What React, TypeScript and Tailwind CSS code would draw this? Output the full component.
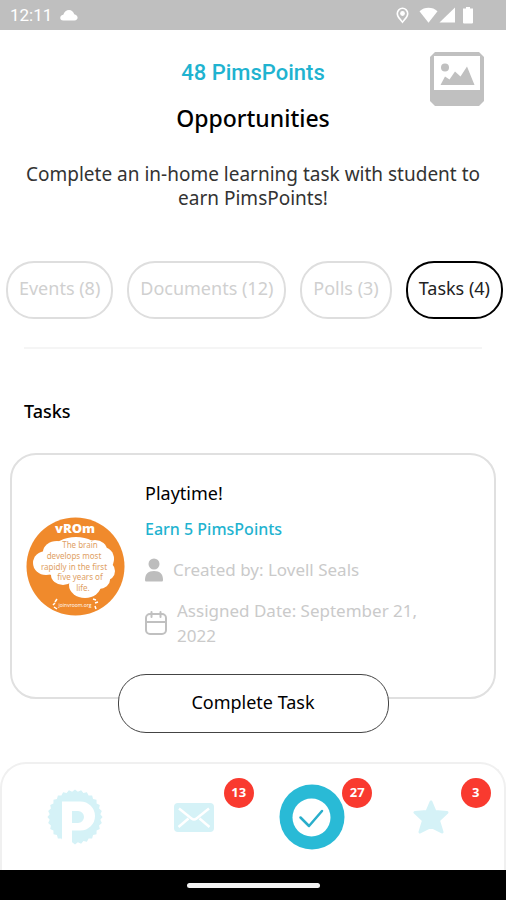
import { clsx } from "clsx";

const tabs = [
  { label: "Events (8)", active: false },
  { label: "Documents (12)", active: false },
  { label: "Polls (3)", active: false },
  { label: "Tasks (4)", active: true },
];

const StatusBar = () => (
  <div className="flex h-[30px] items-center justify-between bg-[#bfbfbf] px-2.5 font-['Roboto',sans-serif] text-white">
    <div className="flex items-center gap-2">
      <span className="text-[17px] leading-5">12:11</span>
      <svg className="h-3 w-[18px]" viewBox="0 0 18 12" fill="currentColor">
        <path d="M3.500 11.500C.8 11.500 0 9.800.3 8.300.6 6.800 2 6 3.300 5.800 4.200 3 6.500 1 9 1s4.500 1.700 5.200 4.200c2 .3 3.400 1.600 3.400 3.400 0 1.600-1.200 2.900-3.100 2.900z" />
      </svg>
    </div>
    <svg className="mr-5 h-5 w-20" viewBox="0 0 80 20" fill="currentColor">
      <path
        fillRule="evenodd"
        d="M4.500 2.500a6 6 0 0 0-6 6c0 3.800 3 6 6 10 3-4 6-6.200 6-10a6 6 0 0 0-6-6zm0 1.600a4.400 4.400 0 0 1 4.400 4.400c0 2.500-2 4.400-4.400 7.500-2.400-3.100-4.400-5-4.400-7.500a4.400 4.400 0 0 1 4.400-4.400z"
        transform="translate(2 0)"
      />
      <circle cx="6.500" cy="8.500" r="2.400" />
      <path d="M23.500 6.200c5-4.600 13-4.600 18 0L32.500 17.800z" />
      <path d="M59 2.500v15H43.500z" />
      <path d="M70 2h4v1.500h3v14a1 1 0 0 1-1 1h-8a1 1 0 0 1-1-1v-14h3z" />
    </svg>
  </div>
);

const PhotoIcon = () => (
  <svg className="h-[54px] w-[54px]" viewBox="0 0 54 54">
    <path d="M5 0h44l5 5v44l-5 5H5l-5-5V5z" fill="#c0c0c0" />
    <path d="M4 4h46v34H4z" fill="#fff" />
    <circle cx="15" cy="15.500" r="4" fill="#c0c0c0" />
    <path d="M10.500 33l4.500-8.500 4.500 3 5.500-8 5.500 5L37 14.500 44.500 33z" fill="#c0c0c0" />
  </svg>
);

const VroomLogo = () => (
  <svg className="h-[99px] w-[99px] shrink-0" viewBox="0 0 99 99">
    <circle cx="49.500" cy="49.500" r="49" fill="#f08a2c" />
    <g fill="#fff">
      <ellipse cx="50" cy="32" rx="22" ry="12" />
      <ellipse cx="31" cy="35" rx="14" ry="11" />
      <ellipse cx="69" cy="33" rx="12" ry="10" />
      <ellipse cx="20" cy="46" rx="13" ry="12" />
      <ellipse cx="77" cy="42" rx="11" ry="12" />
      <ellipse cx="79" cy="54" rx="10" ry="10" />
      <ellipse cx="50" cy="48" rx="34" ry="15" />
      <ellipse cx="37" cy="58" rx="12" ry="10" />
      <ellipse cx="73" cy="63" rx="11" ry="9" />
      <ellipse cx="59" cy="68" rx="16" ry="13" />
    </g>
    <text x="49" y="16" textAnchor="middle" fontFamily="Open Sans, sans-serif" fontWeight="800" fontSize="13" fill="#fff">
      vROm
    </text>
    <g fontFamily="Noto Sans, sans-serif" fontSize="8" textAnchor="middle" fill="#e0a063">
      <text x="54" y="31">The brain</text>
      <text x="48" y="42">develops most</text>
      <text x="48" y="53">rapidly in the first</text>
      <text x="54" y="63">five years of</text>
      <text x="57" y="74">life.</text>
    </g>
    <text x="49" y="90" textAnchor="middle" fontFamily="Open Sans, sans-serif" fontSize="5" fill="#fff">
      joinvroom.org
    </text>
    <path
      d="M31 82l-2 3M29 86l-2 2M28 90l3 2M67 82l3 1M69 86l3-1M69 89l1 3"
      stroke="#fff"
      strokeWidth="1.500"
      fill="none"
    />
  </svg>
);

const PersonIcon = () => (
  <svg className="h-6 w-[18px] shrink-0" viewBox="0 0 18 24" fill="#bdbdbd">
    <circle cx="9" cy="6" r="5.500" />
    <path d="M0 22c0-6 3-9 9-9s9 3 9 9c0 1-.6 1.500-1.500 1.500h-15C.6 23.500 0 23 0 22z" />
  </svg>
);

const CalendarIcon = () => (
  <svg
    className="h-6 w-[22px] shrink-0"
    viewBox="0 0 22 24"
    fill="none"
    stroke="#c0c0c0"
    strokeWidth="2"
    strokeLinecap="round"
  >
    <rect x="1" y="3" width="20" height="20" rx="4" />
    <path d="M1 11h20M6.500 1v5M15.500 1v5" />
  </svg>
);

// outer edge of the serrated coin
const coinPoints = Array.from({ length: 56 }, (_, i) => {
  const r = i % 2 === 0 ? 27.5 : 25.5;
  const a = (i * Math.PI) / 28;
  return `${(28 + r * Math.cos(a)).toFixed(2)},${(28 + r * Math.sin(a)).toFixed(2)}`;
}).join(" ");

const CoinIcon = () => (
  <svg className="h-14 w-14" viewBox="0 0 56 56">
    <polygon points={coinPoints} fill="#d5f2f7" />
    <path
      fillRule="evenodd"
      d="M15 12.500h18.500a13.500 13.500 0 0 1 0 29H25V56H15zM25 22v12h6a6 6 0 0 0 0-12z"
      fill="#fff"
    />
  </svg>
);

const MailIcon = () => (
  <svg className="h-[29px] w-10" viewBox="0 0 40 29">
    <rect width="40" height="29" rx="4" fill="#d5f2f7" />
    <path
      d="M5 5.500l12.500 10q2.500 2 5 0L35 5.500M4.500 24l10-8.500M35.500 24l-10-8.500"
      fill="none"
      stroke="#fff"
      strokeWidth="2.500"
    />
  </svg>
);

const CheckIcon = () => (
  <svg className="h-[66px] w-[66px]" viewBox="0 0 66 66">
    <circle cx="33" cy="33" r="32.500" fill="#29bad6" />
    <circle cx="32.500" cy="33.500" r="19" fill="#fff" />
    <path
      d="M21.500 33.500l8.500 8.500L43 27"
      fill="none"
      stroke="#29aecb"
      strokeWidth="2.500"
      strokeLinecap="round"
      strokeLinejoin="round"
    />
  </svg>
);

const StarIcon = () => (
  <svg className="h-[34px] w-9" viewBox="0 0 36 34">
    <path
      d="M18 2l4 9.500 12 1-8.500 8 3.500 11.500L18 26.500 7 32l3.500-11.500-8.500-8 12-1z"
      fill="#d5f2f7"
      stroke="#d5f2f7"
      strokeWidth="3"
      strokeLinejoin="round"
    />
  </svg>
);

const navItems = [
  { name: "Home", icon: <CoinIcon />, count: null },
  { name: "Messages", icon: <MailIcon />, count: 13 },
  { name: "Opportunities", icon: <CheckIcon />, count: 27 },
  { name: "Favorites", icon: <StarIcon />, count: 3 },
];

const App = () => {
  return (
    <div className="flex min-h-screen flex-col bg-white font-['Noto_Sans',sans-serif] text-black">
      <StatusBar />

      <header className="grid grid-cols-[1fr_auto_1fr] px-[22px] pt-[22px]">
        <div className="col-start-2 pt-2 text-center">
          <p className="font-['Roboto',sans-serif] text-[22px] leading-[26px] font-medium text-[#1fb3d0]">
            48 PimsPoints
          </p>
          <h1 className="mt-[18px] text-[23px] leading-7 font-medium">Opportunities</h1>
        </div>
        <div className="justify-self-end">
          <PhotoIcon />
        </div>
      </header>

      <main className="flex flex-col">
        <p className="mt-[30px] px-5 text-center text-[19px] leading-6 text-[#333]">
          Complete an in-home learning task with student to earn PimsPoints!
        </p>

        <div className="mt-[51px] flex gap-3.5 pr-[3px] pl-1.5">
          {tabs.map((tab) => (
            <button
              key={tab.label}
              className={clsx(
                "h-[58px] flex-auto rounded-[28px] border-2 pb-1 text-lg leading-6 whitespace-nowrap",
                tab.active ? "border-black text-[#222]" : "border-[#dedede] text-[#d0d0d0]"
              )}
            >
              {tab.label}
            </button>
          ))}
        </div>

        <hr className="mx-6 mt-7 border-t-2 border-[#f5f5f5]" />

        <h2 className="mt-[50px] px-6 text-lg leading-6 font-medium">Tasks</h2>

        <section className="mx-2.5 mt-[30px] flex flex-col">
          <div className="flex min-h-[246px] items-start rounded-[26px] border-2 border-[#e0e0e0] pt-[26px] pr-12 pl-3.5">
            <div className="pt-9">
              <VroomLogo />
            </div>
            <div className="ml-5 flex-1">
              <h3 className="text-lg leading-6">Playtime!</h3>
              <p className="mt-3 text-base leading-6 font-medium text-[#1fb3d0]">Earn 5 PimsPoints</p>
              <div className="mt-4 flex items-center gap-2.5 text-[17px] leading-[25px] text-[#cacaca]">
                <PersonIcon />
                <span>Created by: Lovell Seals</span>
              </div>
              <div className="mt-4 flex items-center gap-2.5 text-[17px] leading-[25px] text-[#cacaca]">
                <CalendarIcon />
                <span>Assigned Date: September 21, 2022</span>
              </div>
            </div>
          </div>
          <button className="-mt-[25px] h-[59px] w-[271px] self-center rounded-[28px] border border-[#444] bg-white pb-1 text-lg">
            Complete Task
          </button>
        </section>
      </main>

      <footer className="mt-auto">
        <nav className="grid h-[108px] grid-cols-4 rounded-t-[26px] border-2 border-b-0 border-[#f0f0f0] px-3.5">
          {navItems.map((item) => (
            <button
              key={item.name}
              aria-label={item.name}
              className="relative flex items-center justify-center"
            >
              {item.icon}
              {item.count !== null && (
                <span className="absolute top-3.5 left-1/2 ml-[30px] flex h-[30px] w-[30px] items-center justify-center rounded-full bg-[#f93a2f] font-['Open_Sans',sans-serif] text-[13px] font-bold text-white">
                  {item.count}
                </span>
              )}
            </button>
          ))}
        </nav>
        <div className="flex h-[30px] items-center justify-center bg-black">
          <div className="h-[5px] w-[133px] rounded-full bg-[#f2f2f2]" />
        </div>
      </footer>
    </div>
  );
};

export default App;
